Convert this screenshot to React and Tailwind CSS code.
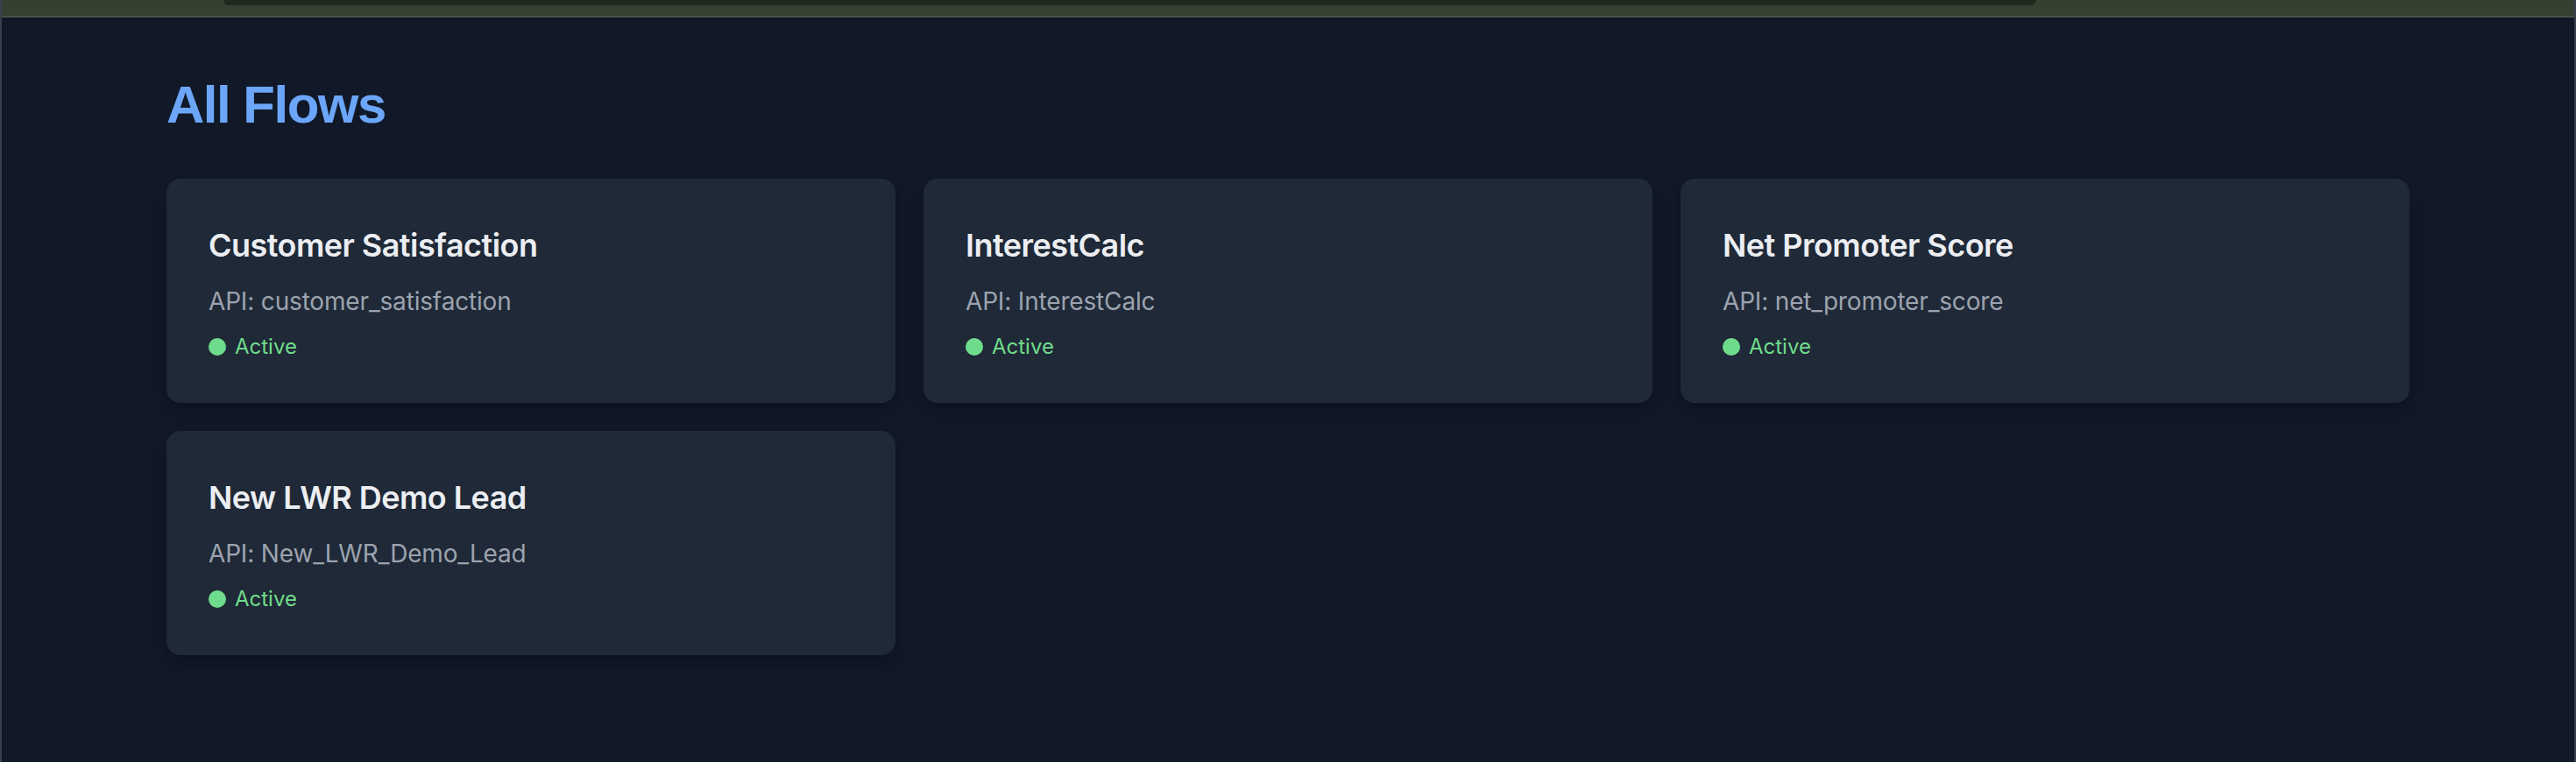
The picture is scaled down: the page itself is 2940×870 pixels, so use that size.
import React from 'react';

const flows = [
  { name: 'Customer Satisfaction', api: 'customer_satisfaction' },
  { name: 'InterestCalc', api: 'InterestCalc' },
  { name: 'Net Promoter Score', api: 'net_promoter_score' },
  { name: 'New LWR Demo Lead', api: 'New_LWR_Demo_Lead' },
];

const FlowCard = ({ flow }) => (
  <div className="rounded-[16px] bg-[#1f2937] p-[48px] shadow-[0_8px_16px_rgba(0,0,0,0.25)]">
    <h2 className="text-[36px] leading-[56px] font-semibold tracking-[-0.015em] text-[#eceef2]">{flow.name}</h2>
    <p className="mt-[16px] text-[28px] leading-[40px] tracking-[-0.006em] text-[#9ca3af]">API: {flow.api}</p>
    <div className="mt-[16px] flex items-center gap-[10px] text-[24px] leading-[32px] text-[#6fdc8c]">
      <span className="h-[20px] w-[20px] rounded-full bg-[#6fdc8c]" />
      <span>Active</span>
    </div>
  </div>
);

export default function App() {
  return (
    <div className="min-h-screen bg-[#111827] border-x-2 border-[#3a404c] font-['Inter','Noto_Sans',sans-serif]">
      <div className="h-[20px] bg-[#344030] border-b-2 border-[#4a5149]">
        <div className="ml-[253px] mr-[614px] h-[6px] rounded-b-[16px] bg-[#1d2a1d]" />
      </div>
      <main className="mx-auto max-w-[2560px] pt-[64px] pb-[64px]">
        <h1 className="mb-[48px] font-['Liberation_Sans','Arial',sans-serif] text-[60px] leading-[72px] font-bold tracking-tight text-[#6ba6f8]">
          All Flows
        </h1>
        <div className="grid grid-cols-3 gap-[32px]">
          {flows.map((f) => (
            <FlowCard key={f.api} flow={f} />
          ))}
        </div>
      </main>
    </div>
  );
}
